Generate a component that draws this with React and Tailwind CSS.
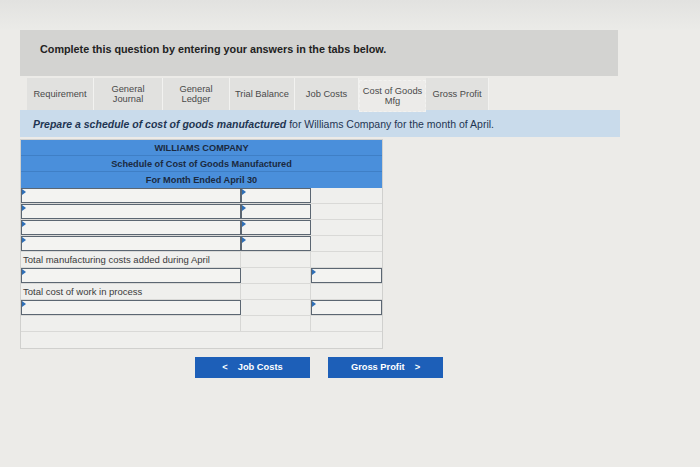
import React from 'react';

const tabs = [
  { label: ['Requirement'], w: 'w-[67px]' },
  { label: ['General', 'Journal'], w: 'w-[69px]' },
  { label: ['General', 'Ledger'], w: 'w-[67px]' },
  { label: ['Trial Balance'], w: 'w-[65px]' },
  { label: ['Job Costs'], w: 'w-[64px]' },
  { label: ['Cost of Goods', 'Mfg'], w: 'w-[67px]', active: true },
  { label: ['Gross Profit'], w: 'w-[63px]' },
];

// small blue marker in input corners
const Marker = () => (
  <span className="absolute left-0 top-0 w-0 h-0 border-t-[3px] border-b-[3px] border-l-[4px] border-t-transparent border-b-transparent border-l-[#2f6fb7]" />
);

const Input = () => (
  <div className="relative h-full border border-[#5b6672] border-t-[1.5px] border-b-[1.5px] bg-[#f3f3f1]">
    <Marker />
  </div>
);

const Row = ({ c1, c2, c3, text }) => (
  <div className="flex h-[16px] border-b border-[#d9d9d7]">
    <div className="w-[221px] h-full">
      {c1 ? (
        <Input />
      ) : (
        <div className="h-full border-r border-[#d7d7d5] pl-[2px] text-[9.5px] leading-[16px] text-[#3a3a3a] whitespace-nowrap">{text}</div>
      )}
    </div>
    <div className="w-[71px] h-full">{c2 ? <Input /> : <div className="h-full border-r border-[#d7d7d5]" />}</div>
    <div className="w-[71px] h-full">{c3 ? <Input /> : <div className="h-full" />}</div>
  </div>
);

export default function App() {
  return (
    <div className="w-[700px] h-[467px] bg-[#ecebe8] overflow-hidden" style={{ fontFamily: '"Liberation Sans", Arial, sans-serif' }}>
      <div className="h-[30px] bg-gradient-to-b from-[#e2e2e0] to-[#ebebe8]" />
      {/* banner */}
      <div className="ml-[20px] w-[598px] h-[46px] bg-[#d3d3d1] pl-[20px] pt-[11px] text-[10.8px] font-bold text-[#222] whitespace-nowrap">
        Complete this question by entering your answers in the tabs below.
      </div>

      {/* tabs */}
      <div className="flex ml-[27px] mt-[2px] h-[32px]">
        {tabs.map((t) => (
          <div
            key={t.label.join(' ')}
            className={`${t.w} h-full flex flex-col items-center justify-center text-[9.3px] leading-[10px] text-[#4a4a4a] whitespace-nowrap border-r border-[#f2f2f0] ${
              t.active ? 'bg-[#ecebe9] border border-dashed border-[#777] mt-[2px] h-[28px]' : 'bg-[#e1e1df]'
            }`}
          >
            {t.label.map((l) => (
              <span key={l}>{l}</span>
            ))}
          </div>
        ))}
      </div>

      {/* instruction */}
      <div className="ml-[20px] w-[600px] h-[27px] bg-[#c9dbeb] pl-[13px] pt-[7px] text-[10.5px] text-[#1f3552] whitespace-nowrap">
        <span className="font-bold italic">Prepare a schedule of cost of goods manufactured</span> for Williams Company for the month of April.
      </div>

      {/* schedule */}
      <div className="ml-[20px] mt-[2px] w-[363px] border border-[#d0d0ce] bg-[#efefed]">
        <div className="bg-[#4a8fdb] text-[#1b2a3f] text-[9.2px] font-bold text-center">
          <div className="h-[16px] leading-[16px] border-b border-[#3f7fc6]">WILLIAMS COMPANY</div>
          <div className="h-[16px] leading-[16px] border-b border-[#3f7fc6]">Schedule of Cost of Goods Manufactured</div>
          <div className="h-[16px] leading-[16px]">For Month Ended April 30</div>
        </div>
        <Row c1 c2 />
        <Row c1 c2 />
        <Row c1 c2 />
        <Row c1 c2 />
        <Row text="Total manufacturing costs added during April" />
        <Row c1 c3 />
        <Row text="Total cost of work in process" />
        <Row c1 c3 />
        <Row />
        <div className="h-[16px]" />
      </div>

      {/* nav buttons */}
      <div className="flex ml-[195px] mt-[8px] gap-[18px]">
        <button className="w-[115px] h-[21px] bg-[#1d5fb8] text-white text-[9.3px] font-bold flex items-center justify-center gap-[10px]">
          <span>&lt;</span>
          <span>Job Costs</span>
        </button>
        <button className="w-[115px] h-[21px] bg-[#1d5fb8] text-white text-[9.3px] font-bold flex items-center justify-center gap-[10px]">
          <span>Gross Profit</span>
          <span>&gt;</span>
        </button>
      </div>
    </div>
  );
}
